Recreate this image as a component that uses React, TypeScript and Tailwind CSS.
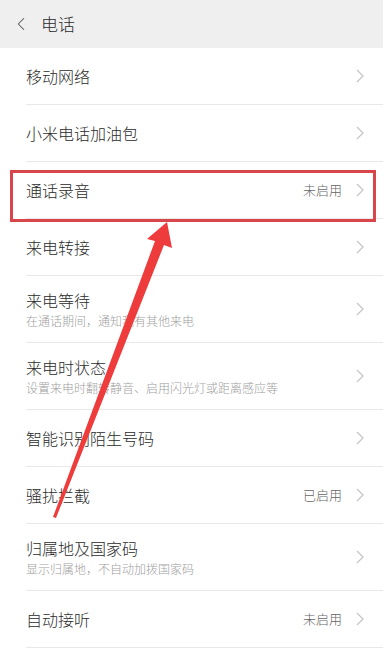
import { ChevronLeft } from 'lucide-react';

type Row = {
  title: string;
  sub?: string;
  value?: string;
  boxed?: boolean;
};

const rows: Row[] = [
  { title: '移动网络' },
  { title: '小米电话加油包' },
  { title: '通话录音', value: '未启用', boxed: true },
  { title: '来电转接' },
  { title: '来电等待', sub: '在通话期间，通知我有其他来电' },
  { title: '来电时状态', sub: '设置来电时翻转静音、启用闪光灯或距离感应等' },
  { title: '智能识别陌生号码' },
  { title: '骚扰拦截', value: '已启用' },
  { title: '归属地及国家码', sub: '显示归属地，不自动加拨国家码' },
  { title: '自动接听', value: '未启用' },
];

function Chevron() {
  return (
    <svg width="8" height="14" viewBox="0 0 8 14" className="shrink-0">
      <path d="M1 1 L7 7 L1 13" fill="none" stroke="#c4c4c4" strokeWidth="1.2" />
    </svg>
  );
}

function SettingRow({ row }: { row: Row }) {
  return (
    <div className="relative pl-[26px]">
      <div
        className={`flex items-center justify-between pr-[19px] border-b border-[#e8e8e8] ${
          row.sub ? 'h-[67px]' : 'h-[57px]'
        }`}
      >
        <div className="flex flex-col">
          <span className="text-[16px] leading-[22px] font-light text-[#2b2b2b]">{row.title}</span>
          {row.sub && (
            <span className="text-[12px] leading-[17px] font-light text-[#9e9e9e] mt-[1px]">{row.sub}</span>
          )}
        </div>
        <div className="flex items-center gap-[14px]">
          {row.value && <span className="text-[13px] font-light text-[#666]">{row.value}</span>}
          <Chevron />
        </div>
      </div>
      {row.boxed && (
        <div className="absolute left-[10px] right-[7px] top-[8px] bottom-[-3px] border-[3px] border-[#d8454b]" />
      )}
    </div>
  );
}

export default function App() {
  return (
    <div
      className="relative w-[383px] h-[668px] overflow-hidden bg-white"
      style={{ fontFamily: '"Noto Sans CJK SC", "Noto Sans", sans-serif' }}
    >
      <div className="h-[48px] bg-[#efefef] flex items-center pl-[10px]">
        <ChevronLeft size={22} strokeWidth={1.1} className="text-[#555]" />
        <span className="ml-[9px] text-[17px] font-light text-[#2b2b2b]">电话</span>
      </div>
      <div>
        {rows.map((r) => (
          <SettingRow key={r.title} row={r} />
        ))}
      </div>
      <svg className="absolute left-0 top-0 pointer-events-none" width="383" height="668">
        <polygon
          points="167,222 172,248 164,245 56,518 53,517 155,241 147,239"
          fill="#ee3b3b"
        />
      </svg>
    </div>
  );
}
